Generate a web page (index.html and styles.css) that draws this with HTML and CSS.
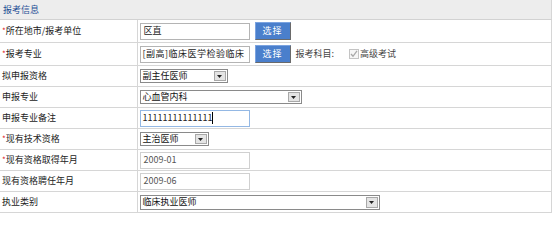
FILE: index.html
```html
<!DOCTYPE html>
<html>
<head>
<meta charset="utf-8">
<link rel="stylesheet" href="styles.css">
</head>
<body>
<table class="form">
  <colgroup><col class="c1"><col class="c2"></colgroup>
  <tr class="head"><td colspan="2">报考信息</td></tr>
  <tr class="tall">
    <td class="l"><span class="req">*</span>所在地市/报考单位</td>
    <td class="v"><div class="line"><span class="inp">区直</span><span class="btn">选择</span></div></td>
  </tr>
  <tr class="tall">
    <td class="l"><span class="req">*</span>报考专业</td>
    <td class="v"><div class="line"><span class="inp clip">[副高]临床医学检验临床</span><span class="btn">选择</span><span class="txt">报考科目:</span><span class="chk"><svg width="8" height="8" viewBox="0 0 8 8"><path d="M1 4 L3 6.3 L7 0.8" fill="none" stroke="#a8a8a8" stroke-width="1.3"/></svg></span><span class="txt2">高级考试</span></div></td>
  </tr>
  <tr>
    <td class="l">拟申报资格</td>
    <td class="v"><div class="sel w88"><span class="st">副主任医师</span><span class="arr"><svg width="5" height="3" viewBox="0 0 5 3"><path d="M0 0H5L2.5 3Z" fill="#222"/></svg></span></div></td>
  </tr>
  <tr>
    <td class="l">申报专业</td>
    <td class="v"><div class="sel w162"><span class="st">心血管内科</span><span class="arr"><svg width="5" height="3" viewBox="0 0 5 3"><path d="M0 0H5L2.5 3Z" fill="#222"/></svg></span></div></td>
  </tr>
  <tr>
    <td class="l">申报专业备注</td>
    <td class="v"><span class="inp focus">11111111111111<i class="caret"></i></span></td>
  </tr>
  <tr>
    <td class="l"><span class="req">*</span>现有技术资格</td>
    <td class="v"><div class="sel w69"><span class="st">主治医师</span><span class="arr"><svg width="5" height="3" viewBox="0 0 5 3"><path d="M0 0H5L2.5 3Z" fill="#222"/></svg></span></div></td>
  </tr>
  <tr>
    <td class="l"><span class="req">*</span>现有资格取得年月</td>
    <td class="v"><span class="inp date">2009-01</span></td>
  </tr>
  <tr>
    <td class="l">现有资格聘任年月</td>
    <td class="v"><span class="inp date">2009-06</span></td>
  </tr>
  <tr>
    <td class="l">执业类别</td>
    <td class="v"><div class="sel w240 big"><span class="st">临床执业医师</span><span class="arr"><svg width="5" height="3" viewBox="0 0 5 3"><path d="M0 0H5L2.5 3Z" fill="#222"/></svg></span></div></td>
  </tr>
</table>
</body>
</html>
```
FILE: styles.css
```css
html, body {
  margin: 0;
  padding: 0;
  background: #ffffff;
}
body {
  font-family: "Noto Sans CJK SC", "Liberation Sans", sans-serif;
  font-size: 9px;
  color: #222222;
}
.form {
  border-collapse: collapse;
  width: 551px;
  table-layout: fixed;
}
.c1 { width: 137px; }
.c2 { width: 414px; }
.form td {
  border: 1px solid #d6d6d6;
  padding: 0;
  height: 20px;
  vertical-align: middle;
  line-height: 12px;
}
.form tr.tall td {
  height: 22px;
}
.form tr.head td {
  height: 19px;
  background: #ededed;
  color: #1f4f95;
  padding-left: 3px;
  border-top: 0;
  border-left: 0;
  border-bottom-color: #d2d2d2;
}
.form td.l {
  padding-left: 2px;
  border-left: 0;
  white-space: nowrap;
}
.form td.v {
  padding-left: 2px;
}
.req {
  color: #e0141e;
  font-size: 8px;
}
.line {
  display: flex;
  align-items: center;
}
.inp {
  display: inline-flex;
  align-items: center;
  box-sizing: border-box;
  width: 110px;
  height: 17px;
  border: 1px solid #b4b4b4;
  padding-left: 3px;
  color: #1a1a1a;
  background: #fff;
  white-space: nowrap;
  overflow: hidden;
  vertical-align: middle;
}
.inp.clip {
  letter-spacing: 0.5px;
  padding-left: 2px;
}
.inp.focus {
  border-color: #94b8e4;
  padding-left: 2px;
}
.inp.date {
  border-color: #d0d0d0;
  color: #555;
}
.caret {
  display: inline-block;
  width: 1px;
  height: 12px;
  background: #000;
}
.btn {
  display: inline-flex;
  align-items: center;
  justify-content: center;
  box-sizing: border-box;
  width: 36px;
  height: 18px;
  margin-left: 5px;
  background: #4a7fcc;
  color: #ffffff;
  border: 1px solid;
  border-color: #7ba3e0 #6a6a6a #6a6a6a #7ba3e0;
  letter-spacing: 1px;
}
.txt {
  margin-left: 5px;
  color: #444;
}
.chk {
  display: inline-flex;
  align-items: center;
  justify-content: center;
  box-sizing: border-box;
  width: 10px;
  height: 10px;
  margin-left: 15px;
  border: 1px solid #c4c4c4;
  background: #f6f6f6;
}
.txt2 {
  margin-left: 1px;
  color: #444;
}
.sel {
  display: flex;
  align-items: stretch;
  box-sizing: border-box;
  height: 14px;
  border: 1px solid #8a8a8a;
  background: #fff;
}
.sel.big {
  height: 15px;
}
.w88 { width: 88px; }
.w162 { width: 162px; }
.w69 { width: 69px; }
.w240 { width: 240px; }
.st {
  flex: 1;
  display: flex;
  align-items: center;
  padding-left: 2px;
  color: #111;
  white-space: nowrap;
  overflow: hidden;
}
.arr {
  display: flex;
  align-items: center;
  justify-content: center;
  box-sizing: border-box;
  width: 12px;
  margin: 1px;
  background: #e4e4e4;
  border: 1px solid #a8a8a8;
}
```
